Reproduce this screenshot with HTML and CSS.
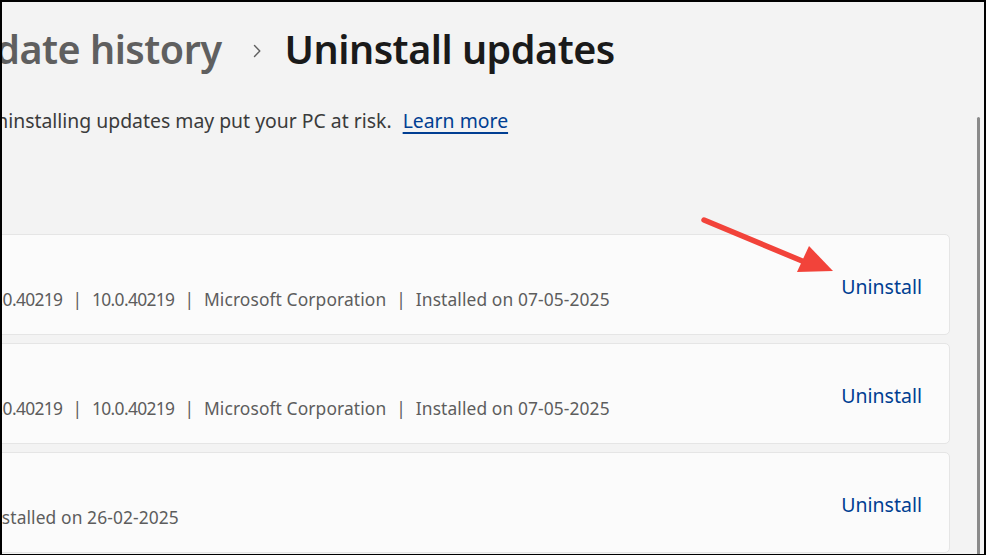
FILE: index.html
```html
<!DOCTYPE html>
<html lang="en">
<head>
<meta charset="utf-8">
<title>Uninstall updates</title>
<link rel="stylesheet" href="styles.css">
</head>
<body>
  <div class="frame">
    <main class="main">
      <header class="breadcrumb">
        <span class="crumb-prev">Update history</span>
        <span class="crumb-sep" aria-hidden="true">
          <svg width="8" height="14" viewBox="0 0 8 14"><path d="M1.5 1.5 L6.8 7 L1.5 12.5" fill="none" stroke="#5f5f5f" stroke-width="1.4" stroke-linecap="round" stroke-linejoin="round"/></svg>
        </span>
        <h1 class="crumb-current">Uninstall updates</h1>
      </header>

      <p class="notice">Uninstalling updates may put your PC at risk. <a class="link" href="#">Learn more</a></p>

      <section class="list">
        <div class="card">
          <div class="card-text">
            <div class="card-title-spacer"></div>
            <div class="meta meta-a"><span class="num">10.0.40219</span><span class="sep">|</span><span class="num">10.0.40219</span><span class="sep">|</span><span>Microsoft Corporation</span><span class="sep">|</span><span>Installed on 07-05-2025</span></div>
          </div>
          <a class="action" href="#">Uninstall</a>
        </div>
        <div class="card">
          <div class="card-text">
            <div class="card-title-spacer"></div>
            <div class="meta meta-a"><span class="num">10.0.40219</span><span class="sep">|</span><span class="num">10.0.40219</span><span class="sep">|</span><span>Microsoft Corporation</span><span class="sep">|</span><span>Installed on 07-05-2025</span></div>
          </div>
          <a class="action" href="#">Uninstall</a>
        </div>
        <div class="card">
          <div class="card-text">
            <div class="card-title-spacer"></div>
            <div class="meta meta-b"><span>Installed on 26-02-2025</span></div>
          </div>
          <a class="action" href="#">Uninstall</a>
        </div>
      </section>

      <svg class="arrow" width="150" height="70" viewBox="0 0 150 70" aria-hidden="true">
        <line x1="3" y1="3" x2="106" y2="46" stroke="#f2433a" stroke-width="5.5" stroke-linecap="round"/>
        <polygon points="96,55 108,29 132,54" fill="#f2433a"/>
      </svg>
    </main>
    <div class="scroll" aria-hidden="true"><div class="thumb"></div></div>
  </div>
</body>
</html>
```

FILE: styles.css
```css
* { box-sizing: border-box; }

html, body {
  margin: 0;
  padding: 0;
  width: 986px;
  height: 555px;
  overflow: hidden;
  background: #000;
}

.frame {
  width: 986px;
  height: 555px;
  border-style: solid;
  border-color: #000;
  border-width: 2px 2px 1px 2px;
  background: #f3f3f3;
  display: flex;
  overflow: hidden;
  font-family: "Noto Sans", "Open Sans", sans-serif;
}

.main {
  position: relative;
  width: 948px;
  flex: none;
  padding-top: 19px;
  display: flex;
  flex-direction: column;
}

.breadcrumb {
  display: flex;
  align-items: center;
  height: 56px;
  white-space: nowrap;
  margin-left: -60px;
}

.crumb-prev {
  font-size: 39.5px;
  line-height: 56px;
  font-weight: 600;
  color: #5f5f5f;
  letter-spacing: -0.5px;
}

.crumb-sep {
  display: flex;
  align-items: center;
  margin: 3px 24px 0 31px;
}

.crumb-current {
  margin: 0;
  font-size: 39.5px;
  line-height: 56px;
  font-weight: 600;
  color: #1a1a1a;
  letter-spacing: -0.5px;
}

.notice {
  margin: 30px 0 0 -20px;
  font-size: 19.4px;
  line-height: 28px;
  color: #3b3b3b;
  white-space: nowrap;
}

.link {
  color: #003e92;
  text-decoration: underline;
  text-underline-offset: 4px;
  text-decoration-thickness: 1.5px;
  margin-left: 6px;
}

.list {
  margin-top: 99px;
  display: flex;
  flex-direction: column;
  gap: 8px;
  margin-left: -20px;
}

.card {
  height: 101px;
  flex: none;
  background: #fbfbfb;
  border: 1px solid #e5e5e5;
  border-radius: 5px;
  display: flex;
  align-items: center;
  justify-content: space-between;
  padding: 0 27px 0 19px;
}

.card-text {
  display: flex;
  flex-direction: column;
  white-space: nowrap;
}

.card-title-spacer { height: 28px; }

.meta {
  font-size: 17.4px;
  line-height: 24px;
  color: #5d5d5d;
  letter-spacing: 0.1px;
  display: flex;
}

.num { letter-spacing: -0.65px; }

.meta-a { margin-left: -22px; }
.meta-b { margin-left: -17px; }

.sep { margin: 0 10px; letter-spacing: 0; }

.action {
  font-size: 19.5px;
  line-height: 28px;
  color: #003e92;
  text-decoration: none;
  margin-top: 5px;
}

.arrow {
  position: absolute;
  left: 699px;
  top: 215px;
}

.scroll {
  flex: 1;
  padding: 115px 4px 0 27px;
  display: flex;
}

.thumb {
  width: 3px;
  background: #8a8a8a;
  border-radius: 2px 2px 0 0;
}
```
